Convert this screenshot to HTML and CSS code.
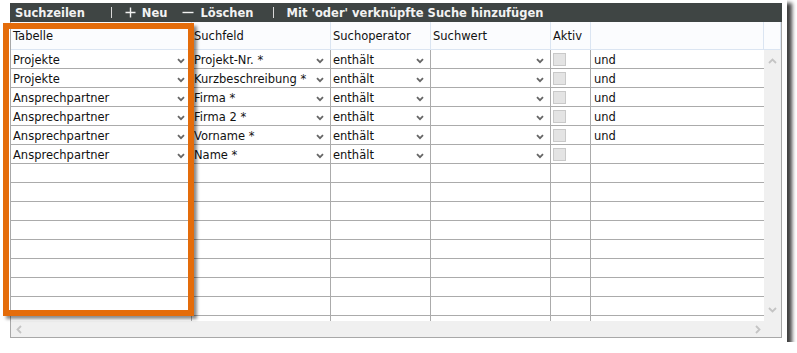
FILE: index.html
```html
<!DOCTYPE html>
<html lang="de">
<head>
<meta charset="utf-8">
<title>Suchzeilen</title>
<link rel="stylesheet" href="styles.css">
</head>
<body>
<div class="shot">
  <div class="panel">
    <div class="toolbar">
      <span class="tb-title">Suchzeilen</span>
      <span class="tb-sep"></span>
      <span class="tb-btn tb-new"><svg class="ico" width="11" height="11" viewBox="0 0 11 11"><path d="M5.5 0.5v10M0.5 5.5h10" stroke="#f2f2f2" stroke-width="1.4" fill="none"/></svg>Neu</span>
      <span class="tb-btn tb-del"><svg class="ico" width="12" height="11" viewBox="0 0 12 11"><path d="M0.5 5.5h11" stroke="#f2f2f2" stroke-width="1.4" fill="none"/></svg>Löschen</span>
      <span class="tb-sep tb-sep2"></span>
      <span class="tb-btn tb-or">Mit 'oder' verknüpfte Suche hinzufügen</span>
    </div>
    <div class="content">
      <div class="grid-head row">
        <div class="hc">Tabelle</div>
        <div class="hc">Suchfeld</div>
        <div class="hc">Suchoperator</div>
        <div class="hc">Suchwert</div>
        <div class="hc">Aktiv</div>
        <div class="hc"></div>
      </div>
      <div class="head-fill"></div>

      <div class="grid-body">
        <div class="row">
          <div class="c sel">Projekte<svg class="chev" width="8" height="6" viewBox="0 0 8 6"><path d="M1 1.2l3 3 3-3" stroke="#666" stroke-width="1.8" fill="none"/></svg></div>
          <div class="c sel">Projekt-Nr. *<svg class="chev" width="8" height="6" viewBox="0 0 8 6"><path d="M1 1.2l3 3 3-3" stroke="#666" stroke-width="1.8" fill="none"/></svg></div>
          <div class="c sel">enthält<svg class="chev" width="8" height="6" viewBox="0 0 8 6"><path d="M1 1.2l3 3 3-3" stroke="#666" stroke-width="1.8" fill="none"/></svg></div>
          <div class="c sel"><svg class="chev" width="8" height="6" viewBox="0 0 8 6"><path d="M1 1.2l3 3 3-3" stroke="#666" stroke-width="1.8" fill="none"/></svg></div>
          <div class="c"><span class="cb"></span></div>
          <div class="c last">und</div>
        </div>
        <div class="row">
          <div class="c sel">Projekte<svg class="chev" width="8" height="6" viewBox="0 0 8 6"><path d="M1 1.2l3 3 3-3" stroke="#666" stroke-width="1.8" fill="none"/></svg></div>
          <div class="c sel">Kurzbeschreibung *<svg class="chev" width="8" height="6" viewBox="0 0 8 6"><path d="M1 1.2l3 3 3-3" stroke="#666" stroke-width="1.8" fill="none"/></svg></div>
          <div class="c sel">enthält<svg class="chev" width="8" height="6" viewBox="0 0 8 6"><path d="M1 1.2l3 3 3-3" stroke="#666" stroke-width="1.8" fill="none"/></svg></div>
          <div class="c sel"><svg class="chev" width="8" height="6" viewBox="0 0 8 6"><path d="M1 1.2l3 3 3-3" stroke="#666" stroke-width="1.8" fill="none"/></svg></div>
          <div class="c"><span class="cb"></span></div>
          <div class="c last">und</div>
        </div>
        <div class="row">
          <div class="c sel">Ansprechpartner<svg class="chev" width="8" height="6" viewBox="0 0 8 6"><path d="M1 1.2l3 3 3-3" stroke="#666" stroke-width="1.8" fill="none"/></svg></div>
          <div class="c sel">Firma *<svg class="chev" width="8" height="6" viewBox="0 0 8 6"><path d="M1 1.2l3 3 3-3" stroke="#666" stroke-width="1.8" fill="none"/></svg></div>
          <div class="c sel">enthält<svg class="chev" width="8" height="6" viewBox="0 0 8 6"><path d="M1 1.2l3 3 3-3" stroke="#666" stroke-width="1.8" fill="none"/></svg></div>
          <div class="c sel"><svg class="chev" width="8" height="6" viewBox="0 0 8 6"><path d="M1 1.2l3 3 3-3" stroke="#666" stroke-width="1.8" fill="none"/></svg></div>
          <div class="c"><span class="cb"></span></div>
          <div class="c last">und</div>
        </div>
        <div class="row">
          <div class="c sel">Ansprechpartner<svg class="chev" width="8" height="6" viewBox="0 0 8 6"><path d="M1 1.2l3 3 3-3" stroke="#666" stroke-width="1.8" fill="none"/></svg></div>
          <div class="c sel">Firma 2 *<svg class="chev" width="8" height="6" viewBox="0 0 8 6"><path d="M1 1.2l3 3 3-3" stroke="#666" stroke-width="1.8" fill="none"/></svg></div>
          <div class="c sel">enthält<svg class="chev" width="8" height="6" viewBox="0 0 8 6"><path d="M1 1.2l3 3 3-3" stroke="#666" stroke-width="1.8" fill="none"/></svg></div>
          <div class="c sel"><svg class="chev" width="8" height="6" viewBox="0 0 8 6"><path d="M1 1.2l3 3 3-3" stroke="#666" stroke-width="1.8" fill="none"/></svg></div>
          <div class="c"><span class="cb"></span></div>
          <div class="c last">und</div>
        </div>
        <div class="row">
          <div class="c sel">Ansprechpartner<svg class="chev" width="8" height="6" viewBox="0 0 8 6"><path d="M1 1.2l3 3 3-3" stroke="#666" stroke-width="1.8" fill="none"/></svg></div>
          <div class="c sel">Vorname *<svg class="chev" width="8" height="6" viewBox="0 0 8 6"><path d="M1 1.2l3 3 3-3" stroke="#666" stroke-width="1.8" fill="none"/></svg></div>
          <div class="c sel">enthält<svg class="chev" width="8" height="6" viewBox="0 0 8 6"><path d="M1 1.2l3 3 3-3" stroke="#666" stroke-width="1.8" fill="none"/></svg></div>
          <div class="c sel"><svg class="chev" width="8" height="6" viewBox="0 0 8 6"><path d="M1 1.2l3 3 3-3" stroke="#666" stroke-width="1.8" fill="none"/></svg></div>
          <div class="c"><span class="cb"></span></div>
          <div class="c last">und</div>
        </div>
        <div class="row">
          <div class="c sel">Ansprechpartner<svg class="chev" width="8" height="6" viewBox="0 0 8 6"><path d="M1 1.2l3 3 3-3" stroke="#666" stroke-width="1.8" fill="none"/></svg></div>
          <div class="c sel">Name *<svg class="chev" width="8" height="6" viewBox="0 0 8 6"><path d="M1 1.2l3 3 3-3" stroke="#666" stroke-width="1.8" fill="none"/></svg></div>
          <div class="c sel">enthält<svg class="chev" width="8" height="6" viewBox="0 0 8 6"><path d="M1 1.2l3 3 3-3" stroke="#666" stroke-width="1.8" fill="none"/></svg></div>
          <div class="c sel"><svg class="chev" width="8" height="6" viewBox="0 0 8 6"><path d="M1 1.2l3 3 3-3" stroke="#666" stroke-width="1.8" fill="none"/></svg></div>
          <div class="c"><span class="cb"></span></div>
          <div class="c last"></div>
        </div>
        <div class="row"><div class="c"></div><div class="c"></div><div class="c"></div><div class="c"></div><div class="c"></div><div class="c last"></div></div>
        <div class="row"><div class="c"></div><div class="c"></div><div class="c"></div><div class="c"></div><div class="c"></div><div class="c last"></div></div>
        <div class="row"><div class="c"></div><div class="c"></div><div class="c"></div><div class="c"></div><div class="c"></div><div class="c last"></div></div>
        <div class="row"><div class="c"></div><div class="c"></div><div class="c"></div><div class="c"></div><div class="c"></div><div class="c last"></div></div>
        <div class="row"><div class="c"></div><div class="c"></div><div class="c"></div><div class="c"></div><div class="c"></div><div class="c last"></div></div>
        <div class="row"><div class="c"></div><div class="c"></div><div class="c"></div><div class="c"></div><div class="c"></div><div class="c last"></div></div>
        <div class="row"><div class="c"></div><div class="c"></div><div class="c"></div><div class="c"></div><div class="c"></div><div class="c last"></div></div>
        <div class="row"><div class="c"></div><div class="c"></div><div class="c"></div><div class="c"></div><div class="c"></div><div class="c last"></div></div>
        <div class="row"><div class="c"></div><div class="c"></div><div class="c"></div><div class="c"></div><div class="c"></div><div class="c last"></div></div>
      </div>
      <div class="vscroll">
        <svg width="9" height="6" viewBox="0 0 9 6"><path d="M1 5l3.5-3.5 3.5 3.5" stroke="#c4c4c4" stroke-width="1.8" fill="none"/></svg>
        <svg width="9" height="6" viewBox="0 0 9 6"><path d="M1 1l3.5 3.5 3.5-3.5" stroke="#c4c4c4" stroke-width="1.8" fill="none"/></svg>
      </div>

      <div class="hscroll">
        <svg width="6" height="9" viewBox="0 0 6 9"><path d="M5 1l-3.5 3.5 3.5 3.5" stroke="#c4c4c4" stroke-width="1.8" fill="none"/></svg>
        <svg width="6" height="9" viewBox="0 0 6 9"><path d="M1 1l3.5 3.5-3.5 3.5" stroke="#c4c4c4" stroke-width="1.8" fill="none"/></svg>
      </div>
      <div class="corner"></div>
    </div>
  </div>
  <div class="highlight"></div>
</div>
</body>
</html>
```

FILE: styles.css
```css
html, body {
  margin: 0;
  padding: 0;
  background: #ffffff;
}

body {
  font-family: "DejaVu Sans", Verdana, sans-serif;
  font-size: 11.5px;
  color: #111;
}

.shot {
  position: relative;
  width: 787px;
  height: 342px;
  background: #fff;
  box-shadow: 4px 4px 4px 1px rgba(0, 0, 0, 0.75);
  padding: 3px 0 0 10px;
  box-sizing: border-box;
}

.panel {
  width: 772px;
}

/* toolbar */
.toolbar {
  height: 19px;
  background: #3f4544;
  color: #f2f2f2;
  font-weight: bold;
  display: flex;
  align-items: center;
  padding-left: 5px;
  white-space: nowrap;
}

.tb-title {
  margin-right: 26px;
}

.tb-sep {
  width: 1px;
  height: 11px;
  background: #d8d8d8;
  margin-right: 13px;
}

.tb-sep2 {
  margin-left: 19px;
}

.tb-btn {
  display: flex;
  align-items: center;
}

.ico {
  margin-right: 6px;
}

.tb-del {
  margin-left: 15px;
}

/* content grid */
.content {
  display: grid;
  grid-template-columns: 753px 17px;
  grid-template-rows: 28px 271px 16px;
  border: 1px solid #a8a8a8;
  border-top: 0;
}

.row {
  display: grid;
  grid-template-columns: 181px 139px 100px 120px 40px 173px;
}

.grid-head {
  background: #fbfcfe;
}

.hc {
  border-right: 1px solid #dbe5f2;
  border-bottom: 1px solid #dbe5f2;
  padding-left: 2px;
  padding-top: 1px;
  display: flex;
  align-items: center;
  line-height: 14px;
}

.head-fill {
  background: #fbfcfe;
  border-right: 1px solid #dbe5f2;
  border-bottom: 1px solid #dbe5f2;
}

.grid-body {
  overflow: hidden;
  background: #fff;
}

.grid-body .row {
  height: 19px;
}

.c {
  border-right: 1px solid #ababab;
  border-bottom: 1px solid #ababab;
  padding-left: 2px;
  padding-top: 2px;
  display: flex;
  align-items: center;
  line-height: 16px;
  white-space: nowrap;
  overflow: hidden;
}

.c.last {
  border-right: 0;
  padding-left: 3px;
}

.c.sel {
  justify-content: space-between;
  padding-right: 6px;
}

.chev {
  margin-top: 2px;
  flex: none;
  margin-left: auto;
}

.cb {
  width: 11px;
  height: 11px;
  border: 1px solid #c9c9c9;
  background: #e4e4e4;
  margin-top: -1px;
}

.vscroll {
  background: #f0f0f0;
  display: flex;
  flex-direction: column;
  justify-content: space-between;
  align-items: center;
  padding: 8px 0 8px;
}

.hscroll {
  background: #f0f0f0;
  display: flex;
  justify-content: space-between;
  align-items: center;
  padding: 0 3px 0 5px;
}

.corner {
  background: #f0f0f0;
}

/* annotation overlay */
.highlight {
  position: absolute;
  left: 3px;
  top: 23px;
  width: 191px;
  height: 293px;
  box-sizing: border-box;
  border: 6px solid #e46c0a;
  box-shadow: 3px 3px 3px rgba(0, 0, 0, 0.45);
}
```
